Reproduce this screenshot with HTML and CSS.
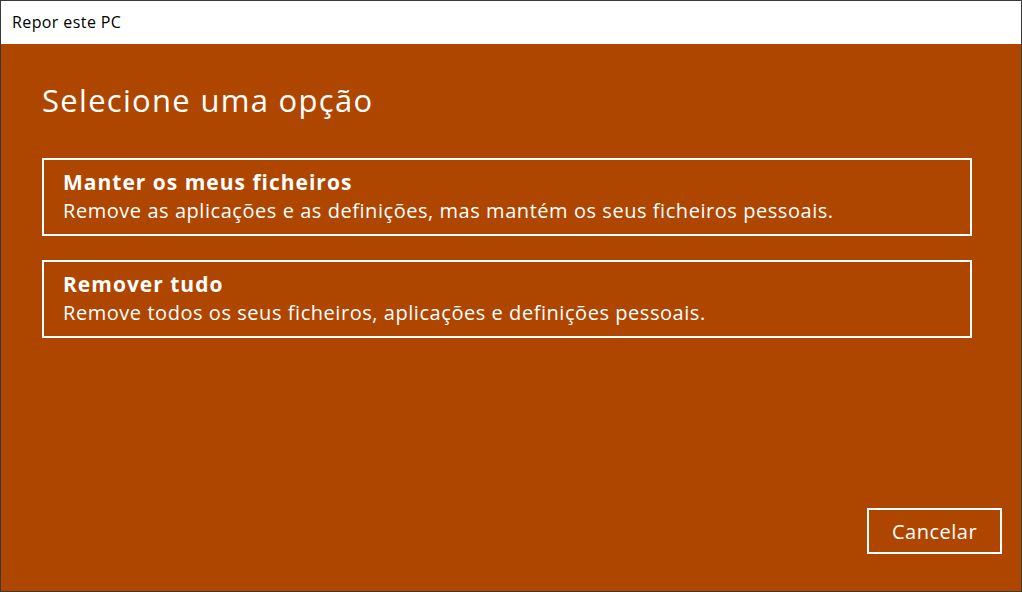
FILE: index.html
```html
<!DOCTYPE html>
<html lang="pt">
<head>
<meta charset="utf-8">
<title>Repor este PC</title>
<link rel="stylesheet" href="styles.css">
</head>
<body>
<div class="window">
  <header class="titlebar">Repor este PC</header>
  <main class="content">
    <h1 class="heading">Selecione uma opção</h1>
    <div class="options">
      <button class="option">
        <span class="option-title">Manter os meus ficheiros</span>
        <span class="option-desc">Remove as aplicações e as definições, mas mantém os seus ficheiros pessoais.</span>
      </button>
      <button class="option">
        <span class="option-title">Remover tudo</span>
        <span class="option-desc">Remove todos os seus ficheiros, aplicações e definições pessoais.</span>
      </button>
    </div>
    <div class="footer">
      <button class="cancel">Cancelar</button>
    </div>
  </main>
</div>
</body>
</html>
```
FILE: styles.css
```css
html, body {
  margin: 0;
  padding: 0;
  height: 100%;
}
body {
  font-family: "Open Sans", "Noto Sans", sans-serif;
  background: #ae4600;
}
.window {
  box-sizing: border-box;
  width: 1022px;
  height: 592px;
  border: 1px solid #3a3a3a;
  display: flex;
  flex-direction: column;
  background: #ae4600;
  color: #fff;
}
.titlebar {
  height: 43px;
  flex: none;
  background: #fff;
  color: #000;
  font-size: 16px;
  line-height: 42px;
  letter-spacing: 0.4px;
  padding-left: 11px;
  box-sizing: border-box;
}
.content {
  flex: 1;
  display: flex;
  flex-direction: column;
  padding: 0 49px 0 41px;
}
.heading {
  margin: 34px 0 0 0;
  font-weight: 400;
  font-size: 31px;
  line-height: 44px;
  letter-spacing: 1.3px;
}
.options {
  display: flex;
  flex-direction: column;
  gap: 24px;
  margin-top: 36px;
}
.option {
  box-sizing: border-box;
  height: 78px;
  width: 930px;
  border: 2px solid #fff;
  background: transparent;
  color: #fff;
  font-family: inherit;
  text-align: left;
  padding: 9px 19px;
  display: flex;
  flex-direction: column;
  justify-content: center;
  margin: 0;
}
.option-title {
  font-weight: 700;
  font-size: 21px;
  line-height: 28px;
  letter-spacing: 1px;
}
.option-desc {
  font-size: 20px;
  line-height: 30px;
  letter-spacing: 0.55px;
}
.footer {
  margin-top: auto;
  display: flex;
  justify-content: flex-end;
  padding-bottom: 37px;
  margin-right: -30px;
}
.cancel {
  box-sizing: border-box;
  width: 135px;
  height: 46px;
  border: 2px solid #fff;
  background: transparent;
  color: #fff;
  font-family: inherit;
  font-size: 20px;
  letter-spacing: 0.5px;
  padding: 0;
}
```
